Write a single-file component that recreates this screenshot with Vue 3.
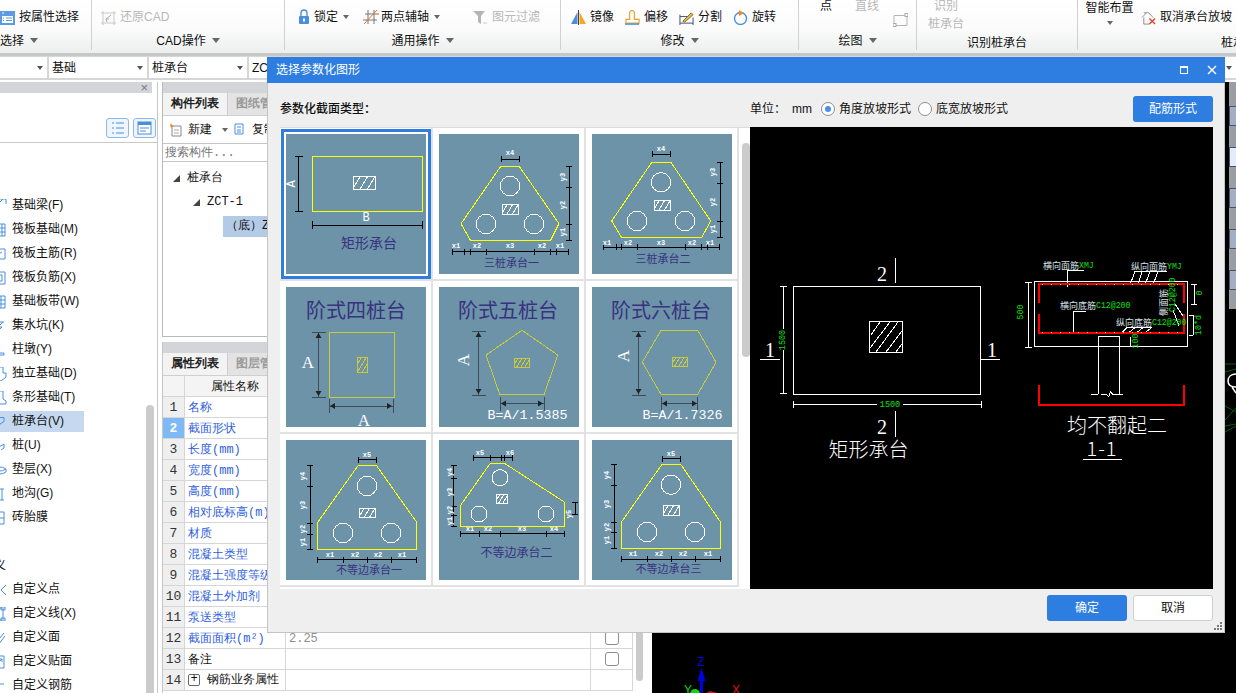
<script setup>
const hl = (y, xs, t = 4) => [[xs[0], y, xs[xs.length - 1], y], ...xs.map((x) => [x, y - t, x, y + t])]
const vl = (x, ys, t = 4) => [[x, ys[0], x, ys[ys.length - 1]], ...ys.map((y) => [x - t, y, x + t, y])]
const hatch = (x, y, w, h, n, k = 0.6) => {
  const out = []
  const step = (w + h * k) / (n + 1)
  for (let i = 1; i <= n; i++) {
    const c = i * step - h * k
    let x1 = x + c, y1 = y + h, x2 = x1 + h * k, y2 = y
    if (x1 < x) { y1 = y + h - ((x - x1) / (h * k)) * h; x1 = x }
    if (x2 > x + w) { y2 = y + ((x2 - x - w) / (h * k)) * h; x2 = x + w }
    out.push([x1, y1, x2, y2])
  }
  return out
}
const ah = (x, y, d) => `${x},${y} ${x + d * 5},${y - 3} ${x + d * 5},${y + 3}`
const av = (x, y, d) => `${x},${y} ${x - 3},${y + d * 5} ${x + 3},${y + d * 5}`
const s = (arr, rot) => arr.map(([x, y, text]) => ({ x, y, text, cls: 'small', rot }))

const thumbs = [
  {
    rect: [26.5, 22.5, 110, 55], hatch: [67, 42, 22, 13, 3], dim: 'dk', lines: [...vl(12.5, [22.5, 77.5], 4), ...hl(91, [26.5, 136.5], 4)],
    labels: [{ x: 6, y: 50, text: 'A', cls: 'mid', rot: -90 }, { x: 80, y: 84, text: 'B', cls: 'mid' }],
    title: { x: 83, y: 108, text: '矩形承台', cls: 't14' }
  },
  {
    poly: '62,32 80,32 120,89.7 111.7,106 31.3,106 22,89.7', circles: [[71, 52], [47, 90], [95, 90]], hatch: [63, 70, 16, 10, 3], dim: 'dk',
    lines: [...hl(25, [62, 80], 3), ...vl(130, [32, 53, 90, 106], 3), ...hl(117.5, [13, 25, 31, 47, 95, 111, 117, 129], 3)],
    labels: [...s([[71, 19, 'x4'], [17, 112, 'x1'], [38, 112, 'x2'], [71, 112, 'x3'], [103, 112, 'x2'], [121, 112, 'x1']]), ...s([[124, 43, 'y3'], [124, 71, 'y2'], [124, 98, 'y1']], -90)],
    title: { x: 72.5, y: 128, text: '三桩承台一', cls: 't11' }
  },
  {
    poly: '60,28 78.7,28 118.7,87 110,103 29.3,103 19.7,87', circles: [[69, 48.3], [45, 87], [93, 87]], hatch: [62, 66, 16, 10, 3], dim: 'dk',
    lines: [...hl(20, [60, 78.7], 3), ...vl(128, [28, 49, 87, 103], 3), ...hl(113, [11, 24, 29, 45, 93, 109, 115, 127], 3)],
    labels: [...s([[69, 15, 'x4'], [15, 109, 'x1'], [36, 109, 'x2'], [69, 109, 'x3'], [100, 109, 'x2'], [118, 109, 'x1']]), ...s([[121, 38, 'y3'], [121, 68, 'y2'], [121, 95, 'y1']], -90)],
    title: { x: 71, y: 124, text: '三桩承台二', cls: 't11' }
  },
  {
    olive: true, poly: '43,45 108.5,45 108.5,110 43,110', hatch: [71, 70, 10, 15, 3], dim: 'gr',
    lines: [...vl(32.5, [45, 110], 7), ...hl(119, [43, 107], 7)], arrows: [av(32.5, 46, 1), av(32.5, 109, -1), ah(44, 119, 1), ah(106, 119, -1)],
    labels: [{ x: 22, y: 75, text: 'A', cls: 'big' }, { x: 78, y: 133, text: 'A', cls: 'big' }],
    title: { x: 70, y: 22, text: '阶式四桩台', cls: 't20' }
  },
  {
    olive: true, poly: '83,43.3 118.7,68 105.3,107.3 60.7,107.3 47,68', hatch: [75, 71, 15, 9, 4], dim: 'gr',
    lines: [...vl(39.5, [44, 108], 7), ...hl(116.5, [61, 105], 7)], arrows: [av(39.5, 45, 1), av(39.5, 107, -1), ah(62, 116.5, 1), ah(104, 116.5, -1)],
    labels: [{ x: 24, y: 73, text: 'A', cls: 'big', rot: -90 }, { x: 88.5, y: 128, text: 'B=A/1.5385', cls: 'mono' }],
    title: { x: 69, y: 22, text: '阶式五桩台', cls: 't20' }
  },
  {
    olive: true, poly: '69,43.3 105.7,43.3 124,75.3 105.7,107.3 69,107.3 50.3,75.3', hatch: [80, 70, 15, 9, 4], dim: 'gr',
    lines: [...vl(46.5, [44, 108], 7), ...hl(116.5, [69, 105.7], 7)], arrows: [av(46.5, 45, 1), av(46.5, 107, -1), ah(70, 116.5, 1), ah(105, 116.5, -1)],
    labels: [{ x: 31, y: 69, text: 'A', cls: 'big', rot: -90 }, { x: 90.5, y: 128, text: 'B=A/1.7326', cls: 'mono' }],
    title: { x: 69, y: 22, text: '阶式六桩台', cls: 't20' }
  },
  {
    poly: '72.3,25.3 90.3,25.3 130.7,82.3 130.7,109.3 31.7,109.3 31.7,82.3', circles: [[81, 46], [57, 93], [105, 93]], hatch: [73, 68, 16, 9, 3], dim: 'dk',
    lines: [...hl(19.5, [72.3, 90.3], 3), ...vl(24, [25.3, 46, 83.3, 94, 109.3], 3), ...hl(119.5, [31.7, 57, 81.7, 105.7, 130.7], 3)],
    labels: [...s([[81, 15, 'x5'], [44, 115, 'x1'], [69, 115, 'x2'], [92, 115, 'x2'], [116, 115, 'x1']]), ...s([[17, 36, 'y4'], [17, 65, 'y3'], [17, 89, 'y2'], [17, 102, 'y1']], -90)],
    title: { x: 83, y: 129, text: '不等边承台一', cls: 't11' }
  },
  {
    poly: '51,23.7 66,23.7 125.3,62 125.3,86 21.3,86 21.3,65.7', circles: [[61, 37.7, 8], [40, 74, 8], [107, 74, 8]], hatch: [57, 54, 11, 9, 3], dim: 'dk',
    lines: [...hl(17.5, [34, 51.7, 62, 65.3, 73.7], 3), ...vl(14.5, [25, 38, 66, 75, 86], 3), ...hl(93.5, [21.3, 40.3, 61, 107.3, 125.3], 3), ...vl(136, [62, 74.3], 3)],
    labels: [...s([[41, 13, 'x5'], [71, 13, 'x6'], [31, 89, 'x1'], [49, 89, 'x2'], [83, 89, 'x3'], [115, 89, 'x4']]), ...s([[11, 32, 'y4'], [11, 52, 'y3'], [11, 70, 'y2'], [11, 81, 'y1'], [130, 74, 'y5']], -90)],
    title: { x: 77.5, y: 111, text: '不等边承台二', cls: 't12' }
  },
  {
    poly: '70,24.3 88.7,24.3 128.7,82.3 128.7,108.3 29.7,108.3 29.7,81.7', circles: [[79, 44.7], [55, 92], [103, 92]], hatch: [71, 65, 16, 10, 3], dim: 'dk',
    lines: [...hl(18.5, [70, 88.7], 3), ...vl(22, [24.3, 45, 82.3, 92.7, 108.3], 3), ...hl(119, [29.7, 55.3, 79.7, 103.7, 128.7], 3)],
    labels: [...s([[79, 14, 'x5'], [41, 114, 'x1'], [67, 114, 'x2'], [91, 114, 'x2'], [116, 114, 'x1']]), ...s([[15, 35, 'y4'], [15, 64, 'y3'], [15, 87, 'y2'], [15, 100, 'y1']], -90)],
    title: { x: 76.5, y: 128, text: '不等边承台三', cls: 't11' }
  }
].map((t) => ({ ...t, hatchLines: hatch(...t.hatch) }))

const listA = [
  ['基础梁(F)', 'M-3 12 L9 0 M6 0h6v5'],
  ['筏板基础(M)', 'M0 1h11v12H0zM4 1v12M8 1v12M0 5h11M0 9h11'],
  ['筏板主筋(R)', 'M0 2h11v10H0zM3 8l5-3'],
  ['筏板负筋(X)', 'M0 1h11v12H0zM4 4h4v6H4z'],
  ['基础板带(W)', 'M3 1h8v12H3zM7 1v12M3 5h8M3 9h8'],
  ['集水坑(K)', 'M-2 3h12M9 3l-5 5h4l-5 5'],
  ['柱墩(Y)', 'M4 3v7H-2M-2 12h12v-2H4'],
  ['独立基础(D)', 'M4 0h5v6h3v4l-5 4-8-2V8h5z'],
  ['条形基础(T)', 'M4 0h5v8l3 2v3H4l-4-2V6l4-2z'],
  ['桩承台(V)', 'M-2 3h12v4L4 11z'],
  ['桩(U)', 'M-2 7h9l3-2v4l-3 2'],
  ['垫层(X)', 'M-4 6a9 4 0 0 1 16 0a9 4 0 0 1-16 0M-4 6v3a9 4 0 0 0 16 0V6'],
  ['地沟(G)', 'M-2 2h12M8 2v11M-2 13h12M4 5v5'],
  ['砖胎膜', 'M-1 1h11v12H-1zM5 1v12M-1 7h11']
]
const listB = [
  ['自定义点', 'M12 2L7 7l5 5'],
  ['自定义线(X)', 'M9 1v12M7 0h4v3H7zM7 11h4v3H7zM-2 1h10M-2 13h10'],
  ['自定义面', 'M-2 12L6 2M1 13l9-11M5 13l6-8M-2 7l5-6'],
  ['自定义贴面', 'M-1 1h11v12H-1zM1 11l7-7M5 4h3v3'],
  ['自定义钢筋', 'M-2 10h6v-5h6']
]
const props = [
  ['名称', 1], ['截面形状', 1], ['长度(mm)', 1], ['宽度(mm)', 1], ['高度(mm)', 1], ['相对底标高(m)', 1], ['材质', 1],
  ['混凝土类型', 1], ['混凝土强度等级', 1], ['混凝土外加剂', 1], ['泵送类型', 1], ['截面面积(m²)', 1, '2.25', true], ['备注', 0, '', true]
]
const comboItems = ['', '基础', '桩承台', 'ZCT-1']
const dots = []
for (let x = 1042; x < 1182; x += 9) { dots.push([x, 284]); dots.push([x, 332]) }
</script>

<template>
  <div class="app">
    <header class="ribbon">
      <section class="grp g1">
        <div class="tools">
          <span class="item">
            <svg class="ic" viewBox="0 0 15 15"><rect y="1" width="15" height="14" fill="#5a9be3"/><rect x="2" y="6" width="11" height="7" fill="#fff"/><path d="M3 8h1M6 8h6M3 10.5h1M6 10.5h6" stroke="#5a9be3"/><path d="M2 3h2" stroke="#fff"/></svg>
            按属性选择
          </span>
        </div>
        <div class="lbl lft">选择<i class="caret"></i></div>
      </section>
      <section class="grp g2">
        <div class="tools">
          <span class="item off">
            <svg class="ic" viewBox="0 0 15 15"><path d="M2 1v14M13 1v14M0 3h15M0 13h15" stroke="#c8c8c8" fill="none"/><path d="M10 5L5 9l3 0M5 9l1 3" stroke="#aaa" fill="none"/></svg>
            还原CAD
          </span>
        </div>
        <div class="lbl">CAD操作<i class="caret"></i></div>
      </section>
      <section class="grp g3">
        <div class="tools">
          <span class="item">
            <svg class="ic lock" viewBox="0 0 12 16"><path d="M3 7V4a3 3 0 0 1 6 0v3" stroke="#4a8fdc" stroke-width="1.4" fill="none"/><rect x="1" y="7" width="10" height="8" rx="1" fill="#4a8fdc"/><rect x="5" y="9.5" width="2" height="3" fill="#fff"/></svg>
            锁定<i class="caret c1"></i>
          </span>
          <span class="item">
            <svg class="ic wide" viewBox="0 0 16 16"><path d="M0 11h14M2 5h14M5 1v14M11 1v14" stroke="#777" fill="none"/><path d="M1 15L14 1" stroke="#e2762e" fill="none"/></svg>
            两点辅轴<i class="caret c1"></i>
          </span>
          <span class="item off">
            <svg class="ic" viewBox="0 0 15 15"><path d="M0 1h12L8 6v8L5 12V6z" fill="#b5b5b5"/><path d="M10 13h4" stroke="#ccc"/></svg>
            图元过滤
          </span>
        </div>
        <div class="lbl">通用操作<i class="caret"></i></div>
      </section>
      <section class="grp g4">
        <div class="tools">
          <span class="item">
            <svg class="ic" viewBox="0 0 15 15"><path d="M0 14L6.5 2v12z" fill="#4a8fdc"/><path d="M8.500 2L15 14H8.500z" fill="#f5a623"/><path d="M7.500 0v15" stroke="#444"/></svg>
            镜像
          </span>
          <span class="item">
            <svg class="ic" viewBox="0 0 16 16"><path d="M1 14V10h4V3a2 2 0 0 1 5 0v7h5v4z" fill="none" stroke="#f0a020" stroke-width="1.2"/><path d="M0 15h15" stroke="#4a8fdc" stroke-width="1.6"/></svg>
            偏移
          </span>
          <span class="item">
            <svg class="ic" viewBox="0 0 16 16"><path d="M1 7h10M1 14h14M1 5v11M15 8v8" stroke="#334a7a" fill="none"/><path d="M4 12l9-9 2 2-9 8z" fill="#e7b74d" stroke="#8a6d2e"/></svg>
            分割
          </span>
          <span class="item">
            <svg class="ic" viewBox="0 0 15 15"><circle cx="7.500" cy="8.500" r="6" fill="none" stroke="#4a8fdc" stroke-width="1.4"/><path d="M6 0l5 3-5 3z" fill="#f08a24"/></svg>
            旋转
          </span>
        </div>
        <div class="lbl">修改<i class="caret"></i></div>
      </section>
      <section class="grp g5">
        <div class="tools">
          <span class="raised">点</span>
          <span class="raised off">直线</span>
          <svg class="ic rectic" viewBox="0 0 15 14"><path d="M1 3h13v10H1z" fill="none" stroke="#b5b5b5"/><rect x="12" y="1" width="3" height="3" fill="#fff" stroke="#aaa"/><rect y="11" width="3" height="3" fill="#fff" stroke="#aaa"/></svg>
        </div>
        <div class="lbl">绘图<i class="caret"></i></div>
      </section>
      <section class="grp g6">
        <div class="tools col off">
          <span>识别</span>
          <span>桩承台</span>
        </div>
        <div class="lbl low">识别桩承台</div>
      </section>
      <section class="grp g7">
        <div class="tools">
          <div class="smart"><span>智能布置</span><i class="caret c1"></i></div>
          <span class="item">
            <svg class="ic" viewBox="0 0 16 16"><path d="M1 8l6-6 6 6M3 8v7h6" fill="none" stroke="#888"/><path d="M9 9l6 6M15 9l-6 6" stroke="#e0452c" stroke-width="1.5"/><path d="M3 3h3" stroke="#4a8fdc"/></svg>
            取消承台放坡
          </span>
        </div>
        <div class="lbl low clip">桩承台</div>
      </section>
    </header>

    <div class="combos">
      <div v-for="(c, i) in comboItems" :key="i" class="combo" :class="'cb' + i"><span>{{ c }}</span><i class="tri"></i></div>
    </div>

    <main class="main">
      <aside class="left">
        <div class="phead"><span class="x">×</span></div>
        <div class="btns">
          <span class="vbtn">
            <svg viewBox="0 0 23 20" width="23" height="20"><path d="M6 5h2M6 10h2M6 15h2M10 5h8M10 10h8M10 15h8" stroke="#4a8fdc" fill="none"/></svg>
          </span>
          <span class="vbtn">
            <svg viewBox="0 0 23 20" width="23" height="20"><rect x="5" y="4" width="13" height="12" fill="#fff" stroke="#4a8fdc"/><rect x="5" y="4" width="13" height="3" fill="#4a8fdc"/><path d="M7 10h9M7 13h6" stroke="#4a8fdc"/></svg>
          </span>
        </div>
        <div class="lbody">
          <div class="lists">
            <div v-for="(it, i) in listA" :key="it[0]" class="li" :class="{ on: i === 9 }">
              <svg class="li-ic" viewBox="6 0 12 14"><path :d="it[1]" fill="none" stroke="#4a8fdc"/></svg>
              <span>{{ it[0] }}</span>
            </div>
            <div class="cut">义</div>
            <div v-for="it in listB" :key="it[0]" class="li">
              <svg class="li-ic" viewBox="6 0 12 14"><path :d="it[1]" fill="none" stroke="#4a8fdc"/></svg>
              <span>{{ it[0] }}</span>
            </div>
          </div>
          <div class="ltrack"></div>
        </div>
      </aside>

      <section class="mid">
        <div class="comp">
          <div class="phead"></div>
          <div class="tabs">
            <span class="tab act">构件列表</span>
            <span class="tab">图纸管理</span>
          </div>
          <div class="cmd">
            <span class="cmd-i">
              <svg viewBox="0 0 13 14" width="13" height="14"><path d="M2 3h9v10H2z" fill="#fff" stroke="#888"/><path d="M1 0l1 2 2 .5-2 1L1 5 .5 3.500 0 2.500z" fill="#e8912d"/><path d="M4 7h5M4 10h5" stroke="#aaa"/></svg>
              新建<i class="caret c1"></i>
            </span>
            <span class="cmd-i">
              <svg viewBox="0 0 13 14" width="13" height="14"><path d="M1 1h8v10H1z" fill="#fff" stroke="#4a8fdc"/><path d="M3 4h4M3 7h4M3 9h4" stroke="#4a8fdc"/></svg>
              复制
            </span>
          </div>
          <div class="search">搜索构件...</div>
          <div class="tree">
            <div class="node n1"><i class="arr"></i>桩承台</div>
            <div class="node n2"><i class="arr"></i>ZCT-1</div>
            <div class="node n3"><span class="picked">（底）ZCT-1</span></div>
          </div>
        </div>

        <div class="attr">
          <div class="phead"></div>
          <div class="tabs t2">
            <span class="tab act">属性列表</span>
            <span class="tab">图层管理</span>
          </div>
          <div class="tablewrap">
            <div class="table">
              <div class="tr th">
                <div class="td num"></div>
                <div class="td name hd">属性名称</div>
                <div class="td val"></div>
                <div class="td chk"></div>
              </div>
              <div v-for="(p, i) in props" :key="p[0]" class="tr">
                <div class="td num" :class="{ cur: i === 1 }">{{ i + 1 }}</div>
                <div class="td name" :class="{ blue: p[1] }">{{ p[0] }}</div>
                <div class="td val">{{ p[2] }}</div>
                <div class="td chk"><i v-if="p[3]" class="box"></i></div>
              </div>
              <div class="tr">
                <div class="td num">14</div>
                <div class="td name plus"><i class="pl">+</i>钢筋业务属性</div>
                <div class="td val"></div>
                <div class="td chk"></div>
              </div>
            </div>
            <div class="ttrack"><i></i></div>
          </div>
        </div>
      </section>

      <section class="canvas">
        <svg class="cv" viewBox="652 80 584 613" width="584" height="613">
          <g stroke="#0c5a0c" fill="none">
            <path d="M1225 362h11M1225 370l11-3M1225 424l11-2M1225 430l11-6M1225 404l11 6M1225 418l11-12"/>
          </g>
          <path d="M1236 372c-5 0-8 3-8 7s2 6 8 6M1232 385l4 6" stroke="#fff" stroke-width="1.500" fill="none"/>
          <path d="M701.500 692v-20" stroke="#0000e0" stroke-width="3"/>
          <path d="M701.500 666l4 13h-8z" fill="#0000e0"/>
          <text class="ax" x="701" y="664" fill="#0000e0">Z</text>
          <circle cx="695" cy="692" r="5" fill="#10d810"/>
          <text class="ax" x="688" y="692" fill="#10d810">Y</text>
          <path d="M706 691h12l-8-2z" fill="#e01010"/>
          <text class="ax" x="736" y="692" fill="#e01010">X</text>
        </svg>
        <div class="rstrip">
          <i class="sq"></i><i class="sq lt"></i><i class="sq"></i><i class="sq"></i><i class="sq"></i>
        </div>
      </section>
    </main>

    <div class="dialog">
      <div class="dtitle">
        <span>选择参数化图形</span>
        <span class="dctl">
          <i class="mx"></i>
          <svg width="10" height="10" viewBox="0 0 10 10"><path d="M1 1l8 8M9 1l-8 8" stroke="#fff" stroke-width="1.400"/></svg>
        </span>
      </div>
      <div class="dhead">
        <b class="dlab">参数化截面类型：</b>
        <span class="unit">单位：</span>
        <span class="mm">mm</span>
        <i class="radio on"></i><span class="rt">角度放坡形式</span>
        <i class="radio"></i><span class="rt">底宽放坡形式</span>
        <button class="pbtn top">配筋形式</button>
      </div>
      <div class="dbody">
        <div class="gallery">
          <div class="grid">
            <div v-for="(t, i) in thumbs" :key="i" class="cell">
              <svg class="thumb" :class="{ sel: i === 0 }" viewBox="0 0 140 140" width="140" height="140">
                <g :class="t.dim">
                  <line v-for="(l, k) in t.lines" :key="k" :x1="l[0]" :y1="l[1]" :x2="l[2]" :y2="l[3]" />
                </g>
                <polygon v-for="(a, k) in t.arrows || []" :key="'a' + k" :points="a" class="arrow" />
                <rect v-if="t.rect" class="ye" :x="t.rect[0]" :y="t.rect[1]" :width="t.rect[2]" :height="t.rect[3]" />
                <polygon v-if="t.poly" :class="t.olive ? 'ol' : 'ye'" :points="t.poly" />
                <circle v-for="(c, k) in t.circles || []" :key="'c' + k" class="wh" :cx="c[0]" :cy="c[1]" :r="c[2] || 9.700" />
                <g :class="t.olive ? 'ol' : 'wh'">
                  <rect :x="t.hatch[0]" :y="t.hatch[1]" :width="t.hatch[2]" :height="t.hatch[3]" />
                  <line v-for="(l, k) in t.hatchLines" :key="'h' + k" :x1="l[0]" :y1="l[1]" :x2="l[2]" :y2="l[3]" />
                </g>
                <text
                  v-for="(l, k) in t.labels" :key="'l' + k" :class="l.cls" :x="l.x" :y="l.y"
                  :transform="l.rot ? `rotate(${l.rot} ${l.x} ${l.y})` : null"
                >{{ l.text }}</text>
                <text :class="t.title.cls" :x="t.title.x" :y="t.title.y">{{ t.title.text }}</text>
              </svg>
            </div>
          </div>
          <div class="gtrack"><i></i></div>
        </div>
        <div class="preview">
          <svg viewBox="750 127 463 462" width="463" height="462">
            <g class="cad">
              <rect x="793.500" y="286.500" width="187" height="108" />
              <rect x="869.500" y="321.500" width="33" height="31" />
              <path d="M871 335l9-13M870 348l20-26M876 352l22-30M886 352l16-21M896 352l6-8" />
              <path d="M895.500 258v25M895.500 411v26M760 359h20M981 359h19" />
              <path d="M783.500 286v43M783.500 350v44M780 286l7 1M780 394l7-1" />
              <path d="M793 404.500h84M903 404.500h78M793 401v7M981 401v7" />
              <rect x="1034.500" y="281.500" width="153" height="65" />
              <path d="M1067.500 287v-16.500h16M1073.500 334v-23h12" />
              <path d="M1130 285l5-13.500h32M1138 285l4-13.500M1145 285l5-13.500M1153 285l5-13.500" />
              <path d="M1122 332.500l5-5h25M1129 332.500l6-5M1137 332.500l6-5M1145 332.500l7-5" />
              <path d="M1175 304l8 12M1173 310l6 16" />
              <path d="M1028.500 282v65M1025 282h7M1025 347h7" />
              <path d="M1194 284v20M1191 284h6M1191 304h6M1193 315v20M1189 315h4M1189 335h4M1130 337v10" />
              <path d="M1098.500 394v-57.500h21V394M1091 394.500h7M1122.700 394.500h-10l-2-3-2 5-2-2h-6" />
              <path d="M1083 459.500h39" />
            </g>
            <g class="red">
              <path d="M1038.500 302.500v-19h145v19M1038.500 313.500v19h145v-19" />
              <path d="M1038.500 385v20h145v-20" />
            </g>
            <rect v-for="(d, i) in dots" :key="i" :x="d[0]" :y="d[1]" width="1" height="1" class="dot" />
            <text class="cap" x="882" y="281">2</text>
            <text class="cap" x="882" y="434">2</text>
            <text class="cap" x="770" y="357">1</text>
            <text class="cap" x="992" y="357">1</text>
            <text class="cap20" x="868.500" y="448">矩形承台</text>
            <text class="cap20" x="1117" y="424">均不翻起二</text>
            <text class="cap20 one" x="1102" y="447">1-1</text>
            <text class="gn" x="782.700" y="340" transform="rotate(-90 782.700 340)">1500</text>
            <text class="gn" x="890" y="405">1500</text>
            <text class="gn" x="1021" y="312" transform="rotate(-90 1021 312)">500</text>
            <text class="gn" x="1200" y="293" transform="rotate(-90 1200 293)">0</text>
            <text class="gn" x="1199" y="325" transform="rotate(-90 1199 325)">10*d</text>
            <text class="gn" x="1136" y="341" transform="rotate(-90 1136 341)">100</text>
            <text class="note" x="1043" y="265">横向面筋<tspan class="gt">XMJ</tspan></text>
            <text class="note" x="1131" y="266">纵向面筋<tspan class="gt">YMJ</tspan></text>
            <text class="note" x="1060" y="305">横向底筋<tspan class="gt">C12@200</tspan></text>
            <text class="note" x="1116" y="322">纵向底筋<tspan class="gt">C12@200</tspan></text>
            <text class="note" x="1163" y="316" transform="rotate(-90 1163 316)">侧面筋</text>
            <text class="note gt" x="1172" y="312" transform="rotate(-90 1172 312)">C12@200</text>
          </svg>
        </div>
      </div>
      <div class="dfoot">
        <button class="pbtn">确定</button>
        <button class="gbtn">取消</button>
        <svg class="grip" width="9" height="9" viewBox="0 0 9 9"><path d="M6 0h2v2H6zM3 3h2v2H3zM6 3h2v2H6zM0 6h2v2H0zM3 6h2v2H3zM6 6h2v2H6z" fill="#777"/></svg>
      </div>
    </div>
  </div>
</template>

<style>
html, body { margin: 0; padding: 0; overflow: hidden; background: #fff; }
</style>

<style scoped>
.app {
  position: relative; width: 1236px; height: 693px; overflow: hidden; display: flex; flex-direction: column;
  background: #fff; color: #111; font: 12px/16px "Liberation Sans", "Noto Sans CJK SC", sans-serif;
}
i { display: inline-block; font-style: normal; }
.ribbon { display: flex; height: 53px; flex: none; overflow: hidden; background: linear-gradient(#fff 0%, #fbfbfb 55%, #ecefee 100%); border-bottom: 3px solid #c6c7c7; }
.grp { flex: none; box-sizing: border-box; height: 50px; border-right: 1px solid #d0d2d2; display: flex; flex-direction: column; }
.g1 { width: 92px; } .g2 { width: 193px; } .g3 { width: 276px; } .g4 { width: 238px; } .g5 { width: 118px; } .g6 { width: 161px; } .g7 { width: 158px; border-right: 0; }
.tools { height: 32px; flex: none; display: flex; align-items: center; padding-top: 2px; box-sizing: border-box; }
.lbl { height: 18px; line-height: 16px; padding-top: 1px; text-align: center; white-space: nowrap; }
.lbl.lft { text-align: left; }
.lbl.low { padding-top: 3px; }
.lbl.clip { padding-left: 143px; overflow: hidden; }
.caret { width: 0; height: 0; margin-left: 6px; vertical-align: 2px; border: 4px solid transparent; border-top: 5px solid #666; border-bottom: 0; }
.c1 { border-width: 3px; border-top-width: 4px; border-bottom: 0; margin-left: 5px; }
.item { display: inline-flex; align-items: center; white-space: nowrap; }
.off { color: #b8b8b8; }
.ic { width: 15px; height: 15px; margin-right: 4px; flex: none; }
.lock { width: 12px; height: 16px; }
.wide { width: 16px; height: 16px; margin-right: 2px; }
.g2 .tools { padding-left: 9px; }
.g3 .tools { padding-left: 13px; gap: 14px; }
.g3 .item:nth-child(2) { margin-right: 19px; }
.g4 .tools { padding-left: 10px; gap: 11px; }
.g5 .tools { align-items: flex-start; padding: 0 0 0 21px; }
.raised { line-height: 12px; margin-right: 23px; }
.rectic { margin: 12px 0 0 -9px; }
.col { flex-direction: column; align-items: flex-start; padding: 0 0 0 11px; height: 32px; }
.col span { line-height: 18px; }
.col span:first-child { padding-left: 6px; margin-top: -3px; }
.smart { display: flex; flex-direction: column; align-items: center; width: 49px; margin: -9px 7px 0 7px; line-height: 15px; white-space: nowrap; flex: none; }
.smart .caret { margin: 5px 0 0; }
.combos { height: 24px; flex: none; background: #d6d6d6; display: flex; gap: 2px; padding-top: 1px; box-sizing: border-box; }
.combo { box-sizing: border-box; height: 21px; width: 98px; background: #fff; display: flex; align-items: center; justify-content: space-between; padding: 0 4px 0 3px; white-space: nowrap; }
.cb0 { width: 47px; }
.cb3 { flex: 1; }
.tri { width: 0; height: 0; border: 3px solid transparent; border-top: 4px solid #555; border-bottom: 0; }
.main { flex: 1; display: flex; min-height: 0; padding-top: 2px; }
.phead { height: 11px; background: #d4d5d9; display: flex; align-items: center; justify-content: flex-end; flex: none; }
.x { color: #777; font-size: 13px; line-height: 11px; padding-right: 4px; }
.left { width: 158px; flex: none; box-sizing: border-box; border-right: 1px solid #c6c6c6; display: flex; flex-direction: column; margin-right: 4px; }
.left .phead { width: 152px; }
.btns { height: 50px; flex: none; box-sizing: border-box; border-bottom: 1px solid #c9c9c9; display: flex; justify-content: flex-end; gap: 4px; padding: 25px 1px 0 0; }
.vbtn { width: 23px; height: 20px; border-radius: 3px; border: 1px solid #8db9ea; background: #eef5fd; box-sizing: border-box; display: block; overflow: hidden; }
.vbtn svg { display: block; margin: -1px; }
.lbody { flex: 1; display: flex; min-height: 0; }
.lists { flex: 1; padding-top: 51px; min-width: 0; }
.li { width: 84px; height: 24px; display: flex; align-items: flex-start; white-space: nowrap; }
.li span { display: block; line-height: 21px; margin-top: 1px; }
.li.on span { width: 72px; background: #c5d8ef; }
.li.on .li-ic { background: #c5d8ef; height: 21px; margin-top: 1px; }
.li-ic { width: 12px; height: 14px; flex: none; margin-top: 5px; overflow: hidden; }
.cut { height: 24px; line-height: 24px; margin: 24px 0 0 -6px; }
.ltrack { width: 8px; margin: 262px 3px 0 0; background: #cbcbcb; border-radius: 4px 4px 0 0; }
.mid { width: 483px; flex: none; display: flex; flex-direction: column; }
.comp { height: 255px; flex: none; box-sizing: border-box; border: solid #b9b9b9; border-width: 0 0 1px 1px; display: flex; flex-direction: column; }
.tabs { height: 22px; flex: none; display: flex; background: #eee; border-bottom: 1px solid #d0d0d0; box-sizing: content-box; }
.tab { width: 64px; line-height: 22px; text-align: center; font-weight: 700; color: #9a9a9a; background: #e3e3e3; border-right: 1px solid #cfcfcf; white-space: nowrap; overflow: hidden; }
.tab.act { color: #222; background: #f3f3f3; }
.cmd { height: 27px; flex: none; display: flex; align-items: center; gap: 6px; padding-left: 7px; background: #fff; }
.cmd-i { display: inline-flex; align-items: center; gap: 5px; white-space: nowrap; }
.search { height: 19px; line-height: 19px; flex: none; box-sizing: border-box; border: solid #c6c6c6; border-width: 1px 0; color: #777; padding-left: 2px; }
.tree { flex: 1; padding-top: 4px; }
.node { height: 24px; line-height: 24px; white-space: nowrap; display: flex; align-items: center; }
.n1 { padding-left: 10px; } .n2 { padding-left: 30px; } .n3 { padding-left: 60px; }
.arr { width: 0; height: 0; margin-right: 7px; border-style: solid; border-width: 0 0 7px 7px; border-color: transparent transparent #444 transparent; }
.picked { background: #b4cbe8; height: 21px; line-height: 21px; padding-left: 3px; width: 120px; overflow: hidden; }
.attr { margin-top: 5px; flex: 1; display: flex; flex-direction: column; min-height: 0; overflow: hidden; border-left: 1px solid #c6c6c6; }
.attr .phead { width: 100%; }
.t2 { background: #ececec; }
.tablewrap { display: flex; flex: 1; min-height: 0; }
.table { width: 470px; flex: none; }
.tr { display: flex; height: 21px; box-sizing: border-box; border-bottom: 1px solid #d6d6d6; }
.td { box-sizing: border-box; border-right: 1px solid #d6d6d6; line-height: 22px; white-space: nowrap; overflow: hidden; }
.num { width: 22px; flex: none; background: #efefef; text-align: center; font-size: 13px; color: #333; }
.cur { background: #7fb8f6; color: #fff; font-weight: 700; }
.name { width: 101px; flex: none; padding-left: 3px; }
.hd { text-align: center; background: #f4f4f4; padding-left: 0; }
.th .num, .th .val, .th .chk { background: #f4f4f4; }
.blue { color: #2f62dc; }
.val { flex: 1; padding-left: 3px; color: #8d8d8d; }
.chk { width: 42px; flex: none; display: flex; align-items: center; justify-content: center; }
.box { width: 14px; height: 14px; box-sizing: border-box; border: 1px solid #8e8e8e; border-radius: 3px; }
.plus { display: flex; align-items: center; }
.pl { width: 12px; height: 12px; box-sizing: border-box; border: 1px solid #666; border-radius: 2px; text-align: center; line-height: 9px; margin: 0 7px 0 0; }
.ttrack { width: 13px; flex: none; display: flex; justify-content: center; border-right: 1px solid #ccc; }
.ttrack i { width: 7px; height: 305px; margin-top: 0; background: #cbcbcb; border-radius: 0 0 4px 4px; }
.canvas { flex: 1; margin-left: 7px; margin-top: 0; background: #000; position: relative; overflow: hidden; }
.cv { position: absolute; left: 0; top: 0; }
.ax { font: 12px "Liberation Sans", sans-serif; text-anchor: middle; }
.rstrip { position: absolute; right: 0; top: 0; width: 7px; height: 227px; box-sizing: border-box; background: #9a9da3; display: flex; flex-direction: column; padding-top: 24px; gap: 21px; overflow: hidden; }
.sq { width: 10px; height: 20px; flex: none; box-sizing: border-box; border: 1px solid #47526b; background: #a4afc4; }
.sq.lt { background: #e2ecfb; }
.dialog { position: absolute; left: 267px; top: 57px; width: 958px; height: 576px; box-sizing: border-box; background: #efefef; border: solid #c4c4c4; border-width: 0 1px 1px 1px; display: flex; flex-direction: column; }
.dtitle { height: 26px; flex: none; margin: 0 -1px; background: #2e7de1; color: #fff; display: flex; align-items: center; justify-content: space-between; padding: 0 9px; }
.dctl { display: flex; align-items: center; gap: 19px; margin-right: -1px; }
.mx { width: 8px; height: 8px; box-sizing: border-box; border: 1px solid #fff; border-top-width: 2px; }
.dhead { height: 44px; flex: none; box-sizing: border-box; display: flex; align-items: center; padding: 7px 11px 0 12px; }
.dlab { font-weight: 500; width: 470px; flex: none; white-space: nowrap; }
.unit { width: 42px; flex: none; }
.mm { width: 29px; flex: none; }
.radio { width: 14px; height: 14px; box-sizing: border-box; border: 1px solid #8e8e8e; border-radius: 50%; background: #fff; flex: none; position: relative; margin-right: 4px; }
.radio.on::after { content: ""; position: absolute; left: 3px; top: 3px; width: 6px; height: 6px; border-radius: 50%; background: #4a90e8; }
.rt { width: 79px; flex: none; white-space: nowrap; }
.pbtn, .gbtn { width: 80px; height: 26px; border-radius: 3px; font: inherit; box-sizing: border-box; padding: 0; }
.pbtn { border: 0; background: #2e7de1; color: #fff; }
.gbtn { border: 1px solid #d0d0d0; background: #fff; color: #111; }
.top { margin-left: auto; }
.dbody { height: 462px; flex: none; display: flex; padding-left: 12px; }
.gallery { width: 470px; flex: none; display: flex; background: #fff; border-top: 1px solid #dcdcdc; box-sizing: border-box; }
.grid { width: 459px; flex: none; display: grid; grid-template-columns: repeat(3, 153px); grid-auto-rows: 153px; }
.cell { box-sizing: border-box; padding: 6px 0 0 6px; border: solid #e2e2e2; border-width: 0 2px 2px 0; overflow: visible; }
.thumb { display: block; background: #6d93a9; shape-rendering: crispEdges; }
.thumb.sel { outline: 3px solid #2e7de1; outline-offset: 2px; }
.thumb line { stroke-width: 1; }
.dk { stroke: #000; } .gr { stroke: #3f4c57; }
.arrow { fill: #222; shape-rendering: auto; }
.ye { fill: none; stroke: #ffff00; stroke-width: 1; }
.ol, .ol rect, .ol line { fill: none; stroke: #c8c93c; stroke-width: 1; }
.wh, .wh rect, .wh line { fill: none; stroke: #fff; stroke-width: 1; }
.thumb text { text-anchor: middle; dominant-baseline: central; fill: #fff; shape-rendering: auto; }
.small { font: 700 7px "Liberation Mono", monospace; }
.mid { font: 12px "Liberation Mono", monospace; }
.big { font: 17px "Liberation Serif", serif; }
.mono { font: 13.300px "Liberation Mono", monospace; }
.thumb .t11, .thumb .t12, .thumb .t14, .thumb .t20 { fill: #38327f; font-family: "Noto Sans CJK SC", sans-serif; }
.t11 { font-size: 11px; } .t12 { font-size: 12px; } .t14 { font-size: 14px; } .t20 { font-size: 20px; }
.gtrack { flex: 1; padding: 15px 0 0 3px; }
.gtrack i { display: block; width: 8px; height: 214px; background: #cbcbcb; border-radius: 4px; }
.preview { width: 463px; height: 462px; flex: none; background: #000; overflow: hidden; }
.preview svg { display: block; }
.cad { fill: none; stroke: #fff; stroke-width: 1; shape-rendering: crispEdges; }
.red { fill: none; stroke: #ff0000; stroke-width: 2; shape-rendering: crispEdges; }
.dot { fill: #ffff40; }
.preview text { fill: #fff; }
.cap { font: 20px "Liberation Serif", serif; text-anchor: middle; }
.cap20 { font: 300 20px "Noto Sans CJK SC", sans-serif; text-anchor: middle; dominant-baseline: central; }
.one { letter-spacing: 1px; }
.preview .gn { fill: #10e010; font: 8.500px "Liberation Mono", monospace; text-anchor: middle; dominant-baseline: central; }
.preview .note { font: 9px "Noto Sans CJK SC", sans-serif; fill: #d8e2e8; dominant-baseline: central; }
.preview .gt { fill: #10e010; font-family: "Liberation Mono", monospace; font-size: 8.200px; }
.dfoot { flex: 1; position: relative; display: flex; justify-content: flex-end; align-items: flex-start; gap: 6px; padding: 6px 11px 0 0; }
.grip { position: absolute; right: 1px; bottom: 1px; }
</style>
